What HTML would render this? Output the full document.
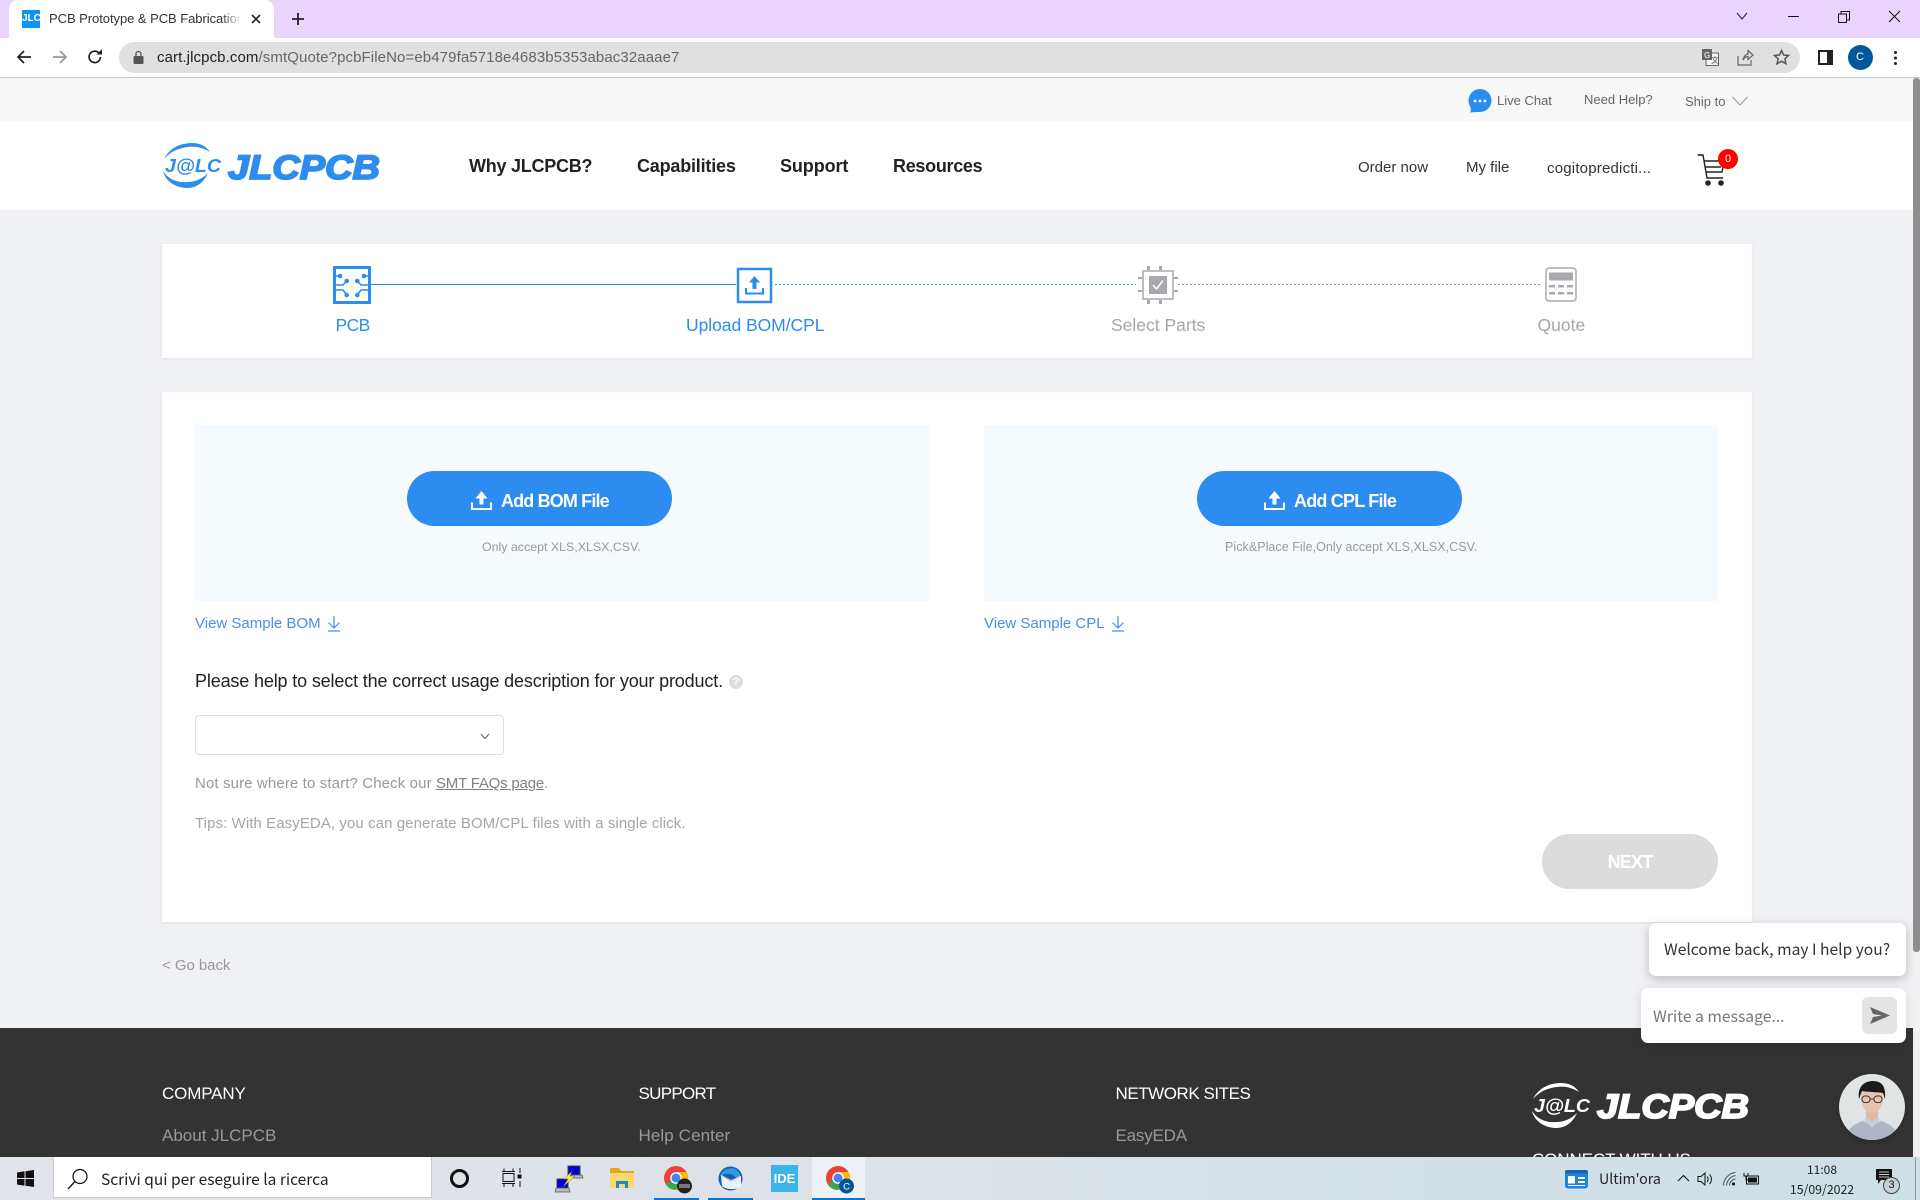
<!DOCTYPE html>
<html><head><meta charset="utf-8"><style>
html,body{margin:0;padding:0;width:1920px;height:1200px;overflow:hidden;background:#f0f1f5}
body{position:relative;font-family:"Liberation Sans",sans-serif}
.b{position:absolute}
.t{position:absolute;white-space:nowrap;line-height:20px;height:20px}
svg{position:absolute;overflow:visible}
.ui{font-family:"Noto Sans CJK SC","Liberation Sans",sans-serif}
</style></head><body>
<!-- tab strip -->
<div class="b" style="left:0;top:0;width:1920px;height:38px;background:#e8d4ff"></div>
<div class="b" style="left:9px;top:0;width:265px;height:38px;background:#fff;border-radius:9px 9px 0 0"></div>
<div class="b" style="left:22px;top:10px;width:18px;height:18px;background:#0b93f6;color:#fff;font:bold 10px/18px 'Liberation Sans';text-align:center;overflow:hidden">JLC</div>
<div class="t" style="left:49px;top:9px;width:193px;overflow:hidden;font-size:13px;color:#333;letter-spacing:-.05px">PCB Prototype &amp; PCB Fabrication Manufacturer</div>
<div class="b" style="left:222px;top:8px;width:20px;height:22px;background:linear-gradient(90deg,rgba(255,255,255,0),#fff)"></div>
<svg style="left:251px;top:14px" width="10" height="10"><path d="M1 1L9 9M9 1L1 9" stroke="#222" stroke-width="1.6"/></svg>
<svg style="left:291px;top:12px" width="14" height="14"><path d="M7 1V13M1 7H13" stroke="#222" stroke-width="1.8"/></svg>
<svg style="left:1736px;top:12px" width="12" height="8"><path d="M1 1L6 7L11 1" fill="none" stroke="#222" stroke-width="1"/></svg>
<div class="b" style="left:1788px;top:16px;width:11px;height:1px;background:#111"></div>
<svg style="left:1838px;top:11px" width="12" height="12"><path d="M.5 3H8.5V11.5H.5ZM3 3V.5H11.5V9H8.5" fill="none" stroke="#111"/></svg>
<svg style="left:1889px;top:11px" width="11" height="11"><path d="M0 0L11 11M11 0L0 11" stroke="#111"/></svg>
<!-- toolbar -->
<div class="b" style="left:0;top:38px;width:1920px;height:39px;background:#fff"></div>
<div class="b" style="left:0;top:77px;width:1920px;height:1px;background:#ccc"></div>
<svg style="left:16px;top:50px" width="16" height="14"><path d="M15 7H2M8 1L2 7L8 13" fill="none" stroke="#222" stroke-width="1.7"/></svg>
<svg style="left:52px;top:50px" width="16" height="14"><path d="M1 7H14M8 1L14 7L8 13" fill="none" stroke="#999" stroke-width="1.7"/></svg>
<svg style="left:87px;top:49px" width="16" height="16"><path d="M13.5 8A5.7 5.7 0 1 1 11.8 3.8" fill="none" stroke="#222" stroke-width="1.7"/><path d="M9.5 5.5H15V0Z" fill="#222"/></svg>
<div class="b" style="left:119px;top:42px;width:1681px;height:31px;background:#e0e0e0;border-radius:16px"></div>
<svg style="left:133px;top:50px" width="11" height="14"><path d="M3 6V4A2.5 2.5 0 0 1 8 4V6" fill="none" stroke="#555" stroke-width="1.3"/><rect x=".5" y="6" width="10" height="8" rx="1" fill="#555"/></svg>
<div class="t" style="left:157px;top:48px;font-size:15px;color:#222;letter-spacing:.1px">cart.jlcpcb.com<span style="color:#666">/smtQuote?pcbFileNo=eb479fa5718e4683b5353abac32aaae7</span></div>
<svg style="left:1702px;top:49px" width="17" height="17"><rect x="4" y="4" width="12.5" height="12.5" fill="#f3f3f3" stroke="#666"/><rect width="10" height="11" fill="#666"/><text x="2" y="9" font-size="8" font-weight="bold" fill="#ddd" font-family="Liberation Sans">G</text><text x="9" y="14" font-size="8" fill="#555" font-family="Noto Sans CJK SC, sans-serif">文</text></svg>
<svg style="left:1737px;top:49px" width="17" height="17"><path d="M1 7V16H14V11M6 11C7 6 10 5 11 5V1.500L16 6L11 10.500V7.500C9 7.500 7 9 6 11Z" fill="none" stroke="#666" stroke-width="1.2"/></svg>
<svg style="left:1773px;top:49px" width="17" height="16"><path d="M8.500 1.500L10.600 6L15.500 6.500L11.900 9.800L12.900 14.700L8.500 12.200L4.100 14.700L5.100 9.800L1.500 6.500L6.400 6Z" fill="none" stroke="#555" stroke-width="1.5"/></svg>
<div class="b" style="left:1818px;top:50px;width:15px;height:15px;background:#222"></div>
<div class="b" style="left:1820px;top:52px;width:7px;height:11px;background:#fff"></div>
<div class="b" style="left:1847.500px;top:44.500px;width:25px;height:25px;border-radius:50%;background:#01579b;color:#fff;font:11px/25px 'Liberation Sans';text-align:center">C</div>
<div class="b" style="left:1894px;top:51px;width:3px;height:3px;border-radius:50%;background:#222;box-shadow:0 5.500px 0 #222,0 11px 0 #222"></div>
<!-- top bar -->
<div class="b" style="left:0;top:78px;width:1913px;height:44px;background:#f7f7f7"></div>
<svg style="left:1468px;top:88px" width="24" height="25"><path d="M12 1A11.500 11.500 0 1 1 12 24C9 24 6 24 2 24.500C3 23 3 21 2.500 19C1 17 .5 15 .5 12.500A11.500 11.500 0 0 1 12 1Z" fill="#2b8df0"/><circle cx="7" cy="13" r="1.400" fill="#fff"/><circle cx="12" cy="13" r="1.400" fill="#fff"/><circle cx="17" cy="13" r="1.400" fill="#fff"/></svg>
<div class="t" style="left:1497px;top:91px;font-size:13px;color:#666">Live Chat</div>
<div class="t" style="left:1584px;top:90px;font-size:13px;color:#666">Need Help?</div>
<div class="t" style="left:1685px;top:92px;font-size:13px;color:#666">Ship to</div>
<svg style="left:1732px;top:96px" width="16" height="10"><path d="M.5 1L8 9L15.500 1" fill="none" stroke="#999" stroke-width="1.100"/></svg>
<!-- nav -->
<div class="b" style="left:0;top:122px;width:1913px;height:88px;background:#fff"></div>
<svg style="left:162px;top:143px" width="220" height="46"><g fill="#2d8cf0"><path d="M2 16C8 4 20 0 30 0C38 0 44 3 48 9C40 4 32 3 26 4C16 5 8 9 2 16Z"/><path d="M1 28C3 38 14 45 25 45C35 45 42 39 46 30C40 36 33 39 25 39C15 40 6 36 1 28Z"/><text x="3" y="29" font-size="18.500" font-weight="bold" font-style="italic" font-family="Liberation Sans" textLength="56" lengthAdjust="spacingAndGlyphs">J@LC</text><text x="66" y="36" font-size="34" font-weight="bold" font-style="italic" font-family="Liberation Sans" stroke="#2d8cf0" stroke-width="1.800" textLength="152" lengthAdjust="spacingAndGlyphs">JLCPCB</text></g></svg>
<div class="t" style="left:469px;top:156px;font-size:18px;font-weight:bold;color:#222;letter-spacing:-.25px">Why JLCPCB?</div>
<div class="t" style="left:637px;top:156px;font-size:18px;font-weight:bold;color:#222;letter-spacing:-.2px">Capabilities</div>
<div class="t" style="left:780px;top:156px;font-size:18px;font-weight:bold;color:#222;letter-spacing:-.1px">Support</div>
<div class="t" style="left:893px;top:156px;font-size:18px;font-weight:bold;color:#222;letter-spacing:-.3px">Resources</div>
<div class="t" style="left:1358px;top:158px;font-size:15px;color:#333">Order now</div>
<div class="t" style="left:1466px;top:158px;font-size:15px;color:#333">My file</div>
<div class="t" style="left:1547px;top:159px;font-size:15px;color:#333;letter-spacing:.2px">cogitopredicti...</div>
<svg style="left:1697px;top:153px" width="34" height="34"><path d="M.5 2H6L10 25H26M7 8H27L25 19H9M8.500 14H24" fill="none" stroke="#222" stroke-width="1.400"/><circle cx="11" cy="30" r="2.800" fill="#222"/><circle cx="24" cy="30" r="2.800" fill="#222"/></svg>
<div class="b" style="left:1718px;top:149px;width:20px;height:20px;border-radius:50%;background:#f00;color:#fff;font:11px/20px 'Liberation Sans';text-align:center">0</div>
<!-- steps -->
<div class="b" style="left:162px;top:244px;width:1590px;height:114px;background:#fff;box-shadow:0 1px 3px rgba(0,0,0,.08)"></div>
<svg style="left:333px;top:266px" width="38" height="38"><rect x="1.500" y="1.500" width="35" height="35" fill="none" stroke="#2d8cf0" stroke-width="3"/><g fill="none" stroke="#2d8cf0" stroke-width="1.500"><path d="M3 10H7M35 10H31M3 19H10L13.700 15M35 19H28L24.300 15M3 24H10L13.700 29M35 24H28L24.300 29"/></g><g fill="#2d8cf0"><circle cx="7" cy="10" r="2.300"/><circle cx="31" cy="10" r="2.300"/><circle cx="13.700" cy="15" r="2.300"/><circle cx="24.300" cy="15" r="2.300"/><circle cx="13.700" cy="29" r="2.300"/><circle cx="24.300" cy="29" r="2.300"/></g></svg>
<div class="b" style="left:371px;top:284px;width:365px;height:1px;background:#2d8cf0"></div>
<svg style="left:737px;top:268px" width="35" height="35"><rect x="1" y="1" width="33" height="33" fill="none" stroke="#2d8cf0" stroke-width="2.500"/><path d="M17.500 8L12 14.500H15.500V21H19.500V14.500H23Z" fill="#2d8cf0"/><path d="M9 20V25.500H26V20" fill="none" stroke="#2d8cf0" stroke-width="2"/></svg>
<div class="b" style="left:775px;top:284px;width:361px;height:1px;background:repeating-linear-gradient(90deg,#2d8cf0 0 2px,transparent 2px 4px)"></div>
<svg style="left:1138px;top:266px" width="40" height="38"><rect x="5" y="5" width="30" height="28" fill="#fff" stroke="#a8a9ad" stroke-width="1.500"/><rect x="11" y="10" width="18" height="18" fill="#a8a9ad"/><path d="M15 19L18.500 23L25 14.500" fill="none" stroke="#fff" stroke-width="1.500"/><path d="M9 0H12V4H9ZM21 0H24V4H21ZM9 34H12V38H9ZM21 34H24V38H21ZM0 11H4V13H0ZM0 24H4V26H0ZM36 11H40V13H36ZM36 24H40V26H36Z" fill="#a8a9ad"/></svg>
<div class="b" style="left:1178px;top:284px;width:363px;height:1px;background:repeating-linear-gradient(90deg,#999 0 2px,transparent 2px 4px)"></div>
<svg style="left:1545px;top:267px" width="32" height="35"><rect x="1" y="1" width="30" height="33" rx="3" fill="none" stroke="#a8a9ad" stroke-width="1.500"/><rect x="4" y="5.500" width="24" height="8" fill="#a8a9ad"/><path d="M4 18H10V20.500H4ZM13 18H19V20.500H13ZM22 18H28V20.500H22ZM4 25H10V27.500H4ZM13 25H19V27.500H13ZM22 25H28V27.500H22Z" fill="#a8a9ad"/></svg>
<div class="t" style="left:335.500px;top:315px;font-size:17.500px;color:#2d8cf0;letter-spacing:-.6px">PCB</div>
<div class="t" style="left:686px;top:315px;font-size:17.500px;color:#2d8cf0;letter-spacing:-.05px">Upload BOM/CPL</div>
<div class="t" style="left:1111px;top:315px;font-size:17.500px;color:#a5a6aa">Select Parts</div>
<div class="t" style="left:1537.500px;top:315px;font-size:17.500px;color:#a5a6aa">Quote</div>
<!-- main -->
<div class="b" style="left:162px;top:392px;width:1590px;height:530px;background:#fff;box-shadow:0 1px 3px rgba(0,0,0,.08)"></div>
<div class="b" style="left:195px;top:425px;width:734px;height:176px;background:#f5faff"></div>
<div class="b" style="left:984px;top:425px;width:734px;height:176px;background:#f5faff"></div>
<div class="b" style="left:407px;top:471px;width:265px;height:55px;border-radius:28px;background:#2d8cf0"></div>
<div class="b" style="left:1197px;top:471px;width:265px;height:55px;border-radius:28px;background:#2d8cf0"></div>
<svg style="left:471px;top:491px" width="21" height="19"><path d="M10.500 0L4.500 7.500H8.500V13.500H12.500V7.500H16.500Z" fill="#fff"/><path d="M1 11.500V18H20V11.500" fill="none" stroke="#fff" stroke-width="2"/></svg>
<svg style="left:1264px;top:491px" width="21" height="19"><path d="M10.500 0L4.500 7.500H8.500V13.500H12.500V7.500H16.500Z" fill="#fff"/><path d="M1 11.500V18H20V11.500" fill="none" stroke="#fff" stroke-width="2"/></svg>
<div class="t" style="left:501px;top:491px;font-size:18px;font-weight:bold;color:#fff;letter-spacing:-.85px">Add BOM File</div>
<div class="t" style="left:1294px;top:491px;font-size:18px;font-weight:bold;color:#fff;letter-spacing:-.8px">Add CPL File</div>
<div class="t" style="left:482px;top:537px;font-size:12.400px;color:#999">Only accept XLS,XLSX,CSV.</div>
<div class="t" style="left:1225px;top:537px;font-size:12.500px;color:#999;letter-spacing:.05px">Pick&amp;Place File,Only accept XLS,XLSX,CSV.</div>
<div class="t" style="left:195px;top:614px;font-size:15px;color:#4a8eea">View Sample BOM</div>
<div class="t" style="left:984px;top:614px;font-size:15px;color:#4a8eea">View Sample CPL</div>
<svg style="left:327px;top:615px" width="14" height="17"><path d="M7 1V13M1.500 7.500L7 13L12.500 7.500M1 16H13" fill="none" stroke="#4a8eea" stroke-width="1.200"/></svg>
<svg style="left:1111px;top:615px" width="14" height="17"><path d="M7 1V13M1.500 7.500L7 13L12.500 7.500M1 16H13" fill="none" stroke="#4a8eea" stroke-width="1.200"/></svg>
<div class="t" style="left:195px;top:671px;font-size:18px;color:#222;letter-spacing:-.15px">Please help to select the correct usage description for your product.</div>
<div class="b" style="left:729px;top:675px;width:14px;height:14px;border-radius:50%;background:#ddd;color:#fff;font:bold 11px/14px 'Liberation Sans';text-align:center">?</div>
<div class="b" style="left:195px;top:715px;width:307px;height:38px;border:1px solid #dcdee2;border-radius:4px;background:#fff"></div>
<svg style="left:480px;top:733px" width="10" height="7"><path d="M1 1L5 5.500L9 1" fill="none" stroke="#666" stroke-width="1.100"/></svg>
<div class="t" style="left:195px;top:774px;font-size:15px;color:#999;letter-spacing:.12px">Not sure where to start? Check our <span style="color:#808080;text-decoration:underline;letter-spacing:-.2px">SMT FAQs page</span>.</div>
<div class="t" style="left:195px;top:814px;font-size:15px;color:#a5a5a5;letter-spacing:.08px">Tips: With EasyEDA, you can generate BOM/CPL files with a single click.</div>
<div class="b" style="left:1542px;top:834px;width:176px;height:55px;border-radius:28px;background:#dcdcdc;color:#fff;font:bold 18px/57px 'Liberation Sans';letter-spacing:-.8px;text-align:center">NEXT</div>
<div class="t" style="left:162px;top:956px;font-size:15px;color:#999;letter-spacing:-.05px">&lt; Go back</div>
<!-- footer -->
<div class="b" style="left:0;top:1028px;width:1913px;height:129px;background:#333;overflow:hidden">
<div class="t" style="left:162px;top:56px;font-size:17px;color:#fff;letter-spacing:-.15px">COMPANY</div>
<div class="t" style="left:638.500px;top:56px;font-size:17px;color:#fff;letter-spacing:-.7px">SUPPORT</div>
<div class="t" style="left:1115.500px;top:56px;font-size:17px;color:#fff;letter-spacing:-.45px">NETWORK SITES</div>
<div class="t" style="left:162px;top:98px;font-size:17px;color:#999">About JLCPCB</div>
<div class="t" style="left:638.500px;top:98px;font-size:17px;color:#999;letter-spacing:.1px">Help Center</div>
<div class="t" style="left:1115.500px;top:98px;font-size:17px;color:#999;letter-spacing:-.2px">EasyEDA</div>
<div class="t" style="left:1532px;top:122px;font-size:17px;color:#fff;letter-spacing:-.1px">CONNECT WITH US</div>
<svg style="left:1531px;top:55px" width="220" height="46"><g fill="#fff"><path d="M2 16C8 4 20 0 30 0C38 0 44 3 48 9C40 4 32 3 26 4C16 5 8 9 2 16Z"/><path d="M1 28C3 38 14 45 25 45C35 45 42 39 46 30C40 36 33 39 25 39C15 40 6 36 1 28Z"/><text x="3" y="29" font-size="18.500" font-weight="bold" font-style="italic" font-family="Liberation Sans" textLength="56" lengthAdjust="spacingAndGlyphs">J@LC</text><text x="66" y="35" font-size="34" font-weight="bold" font-style="italic" font-family="Liberation Sans" stroke="#fff" stroke-width="1.800" textLength="152" lengthAdjust="spacingAndGlyphs">JLCPCB</text></g></svg>
</div>
<!-- scrollbar -->
<div class="b" style="left:1913px;top:78px;width:7px;height:1079px;background:#f1f1f1"></div>
<div class="b" style="left:1913px;top:78px;width:7px;height:874px;background:#8f8f8f;border-radius:3px"></div>
<!-- chat -->
<div class="b" style="left:1649px;top:923px;width:257px;height:53px;background:#fff;border-radius:7px;box-shadow:0 3px 10px rgba(0,0,0,.22)"></div>
<div class="t ui" style="left:1664px;top:939px;font-size:15.600px;color:#333">Welcome back, may I help you?</div>
<div class="b" style="left:1641px;top:988px;width:265px;height:55px;background:#fff;border-radius:7px;box-shadow:0 3px 10px rgba(0,0,0,.12)"></div>
<div class="t ui" style="left:1653px;top:1006px;font-size:15.700px;color:#777">Write a message...</div>
<div class="b" style="left:1862px;top:997px;width:35px;height:37px;background:#e4e4e4;border-radius:6px"></div>
<svg style="left:1870px;top:1007px" width="20" height="17"><path d="M0 0L20 8.500L0 17L3 10L12 8.500L3 7Z" fill="#666"/></svg>
<div class="b" style="left:1839px;top:1074px;width:66px;height:66px;border-radius:50%;background:#e1e4e5;overflow:hidden;box-shadow:0 2px 6px rgba(0,0,0,.2)">
<svg style="left:0;top:0" width="66" height="66"><path d="M6 66C8 55 14 50 24 47L33 51L42 47C52 50 58 55 60 66Z" fill="#aeb6c8"/><rect x="27" y="36" width="12" height="12" fill="#dfb9a3"/><ellipse cx="33" cy="25" rx="11" ry="14" fill="#e8c4ae"/><path d="M20 25C18 11 27 7 34 7C44 7 47 14 46 25L44 19C38 18 28 18 23 17Z" fill="#1b1b1b"/><rect x="23" y="22" width="8" height="6.500" rx="3" fill="none" stroke="#333" stroke-width="1"/><rect x="35" y="22" width="8" height="6.500" rx="3" fill="none" stroke="#333" stroke-width="1"/><path d="M31 25H35" stroke="#333"/><path d="M25 46L33 54L41 46L38 43L33 48L28 43Z" fill="#c6cddc"/></svg>
</div>
<!-- taskbar -->
<div class="b" style="left:0;top:1157px;width:1920px;height:43px;background:linear-gradient(90deg,#e1e4ea 0%,#dde2e8 45%,#cfe0e6 85%,#cde0e6 100%)"></div>
<svg style="left:17px;top:1170px" width="17" height="17"><path d="M0 2.500L7.500 1.300V8H0ZM8.500 1.200L17 0V8H8.500ZM0 9H7.500V15.700L0 14.500ZM8.500 9H17V17L8.500 15.800Z" fill="#111"/></svg>
<div class="b" style="left:53px;top:1157px;width:379px;height:41px;background:#fff;border:1px solid #ccc;border-top:0;box-sizing:border-box"></div>
<svg style="left:67px;top:1168px" width="22" height="22"><circle cx="13" cy="8.500" r="7" fill="none" stroke="#111" stroke-width="1.200"/><path d="M8 13.500L1 21" stroke="#111" stroke-width="1.300"/></svg>
<div class="t ui" style="left:101px;top:1169px;font-size:15.500px;color:#222">Scrivi qui per eseguire la ricerca</div>
<div class="b" style="left:450px;top:1169px;width:13px;height:13px;border:3px solid #111;border-radius:50%"></div>
<svg style="left:502px;top:1168px" width="20" height="20"><path d="M2 .5V3M11 .5V3M0 3.500H13M1 5.500H12V13.500H1ZM0 15.500H13M2 16V19M11 16V19M18 0V5M18 13V19" fill="none" stroke="#111" stroke-width="1"/><rect x="15.500" y="6.500" width="4" height="4" fill="#111"/></svg>
<svg style="left:555px;top:1165px" width="28" height="28"><path d="M13 1H25V10H13Z" fill="#0000d8" stroke="#444"/><path d="M15 10H27L28 13H14Z" fill="#bbb" stroke="#555" stroke-width=".7"/><path d="M2 14H13V23H2Z" fill="#0000d8" stroke="#444"/><path d="M1 23H14L15 27H0Z" fill="#bbb" stroke="#555" stroke-width=".7"/><path d="M17 6L9 14H13L8 22L20 11H15Z" fill="#f5e642" stroke="#555" stroke-width=".4"/></svg>
<svg style="left:610px;top:1168px" width="24" height="20"><path d="M0 1.500A1.500 1.500 0 0 1 1.500 0H9L11 3H24V18A2 2 0 0 1 22 20H2A2 2 0 0 1 0 18Z" fill="#e4a91c"/><path d="M0 5H24V18A2 2 0 0 1 22 20H2A2 2 0 0 1 0 18Z" fill="#fbd96d"/><path d="M6 20V13H18V20H15V16H9V20Z" fill="#1b86d3"/></svg>
<svg style="left:664px;top:1166px" width="32" height="32"><circle cx="12" cy="12" r="12" fill="#ea4335"/><path d="M12 12L1.600 18A12 12 0 0 0 12 24A12 12 0 0 0 22.400 6H12Z" fill="#34a853"/><path d="M12 6H22.400A12 12 0 0 1 12 24L17 15Z" fill="#fbbc05"/><circle cx="12" cy="12" r="5.800" fill="#fff"/><circle cx="12" cy="12" r="4.500" fill="#4285f4"/><circle cx="20.500" cy="20" r="7.500" fill="#222"/><rect x="15" y="18" width="11" height="4" fill="#777"/></svg>
<div class="b" style="left:654px;top:1198px;width:45px;height:2px;background:#0078d7"></div>
<svg style="left:718px;top:1166px" width="25" height="25"><circle cx="12.500" cy="12.500" r="12" fill="#1c5bb0"/><path d="M2 10C5 3 12 1 17 3C23 6 24 14 22 18C19 10 14 7 7 8Z" fill="#2f9be8"/><path d="M3 9L13 14L23 10V21C17 24 9 24 4 20Z" fill="#eef2f8"/><path d="M3 9L13 15L22 10" fill="none" stroke="#a9b9d3"/></svg>
<div class="b" style="left:708px;top:1198px;width:45px;height:2px;background:#0078d7"></div>
<div class="b" style="left:771px;top:1165px;width:27px;height:27px;background:#3db4e7;color:#fff;font:bold 13px/27px 'Liberation Sans';text-align:center">IDE</div>
<div class="b" style="left:812px;top:1157px;width:53px;height:43px;background:#eef2f6"></div>
<svg style="left:826px;top:1166px" width="32" height="32"><circle cx="12" cy="12" r="12" fill="#ea4335"/><path d="M12 12L1.600 18A12 12 0 0 0 12 24A12 12 0 0 0 22.400 6H12Z" fill="#34a853"/><path d="M12 6H22.400A12 12 0 0 1 12 24L17 15Z" fill="#fbbc05"/><circle cx="12" cy="12" r="5.800" fill="#fff"/><circle cx="12" cy="12" r="4.500" fill="#4285f4"/><circle cx="20.500" cy="20" r="7.500" fill="#01579b"/><text x="20.500" y="23.500" text-anchor="middle" font-size="9.500" fill="#fff" font-family="Liberation Sans">C</text></svg>
<div class="b" style="left:812px;top:1198px;width:53px;height:2px;background:#0078d7"></div>
<svg style="left:1565px;top:1170px" width="23" height="19"><rect width="23" height="18.500" rx="3" fill="#1b86e0"/><rect x="3" y="6" width="7" height="7.500" fill="#fff"/><path d="M13 7H20V9H13ZM13 11H20V13H13ZM3 15H20V16H3Z" fill="#fff"/><rect y="0" width="23" height="3.500" rx="2" fill="#1766b6"/></svg>
<div class="t ui" style="left:1599px;top:1169px;font-size:14.200px;color:#222">Ultim'ora</div>
<svg style="left:1677px;top:1174px" width="13" height="8"><path d="M1 7L6.500 1.500L12 7" fill="none" stroke="#111" stroke-width="1.100"/></svg>
<svg style="left:1697px;top:1171px" width="16" height="16"><path d="M1 5.500H4L8 2V14L4 10.500H1ZM10 5.500C11.500 7 11.500 9.500 10 11M12.500 3.500C15 6 15 10.500 12.500 13" fill="none" stroke="#111"/></svg>
<svg style="left:1723px;top:1172px" width="13" height="14"><path d="M.5 13.500C.5 7 6 1 12.500 .5M3.500 13.500C3.500 9 8 4 12.500 3.500M6.500 13.500C6.500 10.500 9.500 7 12.500 7" fill="none" stroke="#555"/><circle cx="10.500" cy="12" r="1.500" fill="#111"/></svg>
<svg style="left:1743px;top:1172px" width="16" height="13"><rect x="3.500" y="4" width="12" height="8" fill="none" stroke="#111"/><rect x="5" y="5.500" width="9" height="5" fill="#111"/><path d="M1 1V4H5V1M3 4V8H5" fill="none" stroke="#111"/></svg>
<div class="t ui" style="left:1792px;top:1160px;width:60px;text-align:center;font-size:12px;color:#222">11:08</div>
<div class="t ui" style="left:1782px;top:1179px;width:80px;text-align:center;font-size:12.300px;color:#222">15/09/2022</div>
<svg style="left:1876px;top:1169px" width="16" height="15"><path d="M0 0H16V11H5L2 15V11H0Z" fill="#111"/><path d="M3 3H13M3 5.500H13M3 8H13" stroke="#fff" stroke-width=".8"/></svg>
<div class="b" style="left:1883px;top:1177px;width:15px;height:15px;border-radius:50%;background:#c8d2d6;border:1px solid #444;color:#111;font:11px/15px 'Liberation Sans';text-align:center">3</div>
<div class="b" style="left:1915px;top:1157px;width:1px;height:43px;background:#8a9a9f"></div>
</body></html>
